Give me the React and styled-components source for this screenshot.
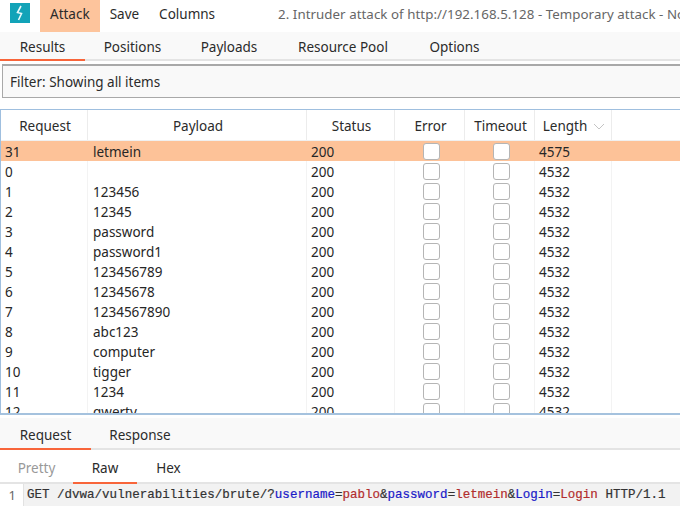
import React from "react";
import styled, { createGlobalStyle } from "styled-components";

const GlobalStyle = createGlobalStyle`
  html, body {
    margin: 0;
    padding: 0;
    background: #fff;
    overflow: hidden;
  }
  body {
    font-family: "Noto Sans", "Open Sans", sans-serif;
    font-size: 13.5px;
    color: #2b2b2b;
  }
`;

const Page = styled.div`
  width: 680px;
  height: 506px;
  display: flex;
  flex-direction: column;
  overflow: hidden;
`;

const MenuBar = styled.div`
  height: 32px;
  flex: none;
  display: flex;
  align-items: center;
  background: #fff;
  white-space: nowrap;
  overflow: hidden;
`;

const Logo = styled.svg`
  width: 20px;
  height: 20px;
  margin: 0 10px 6px 10px;
  flex: none;
`;

const MenuItem = styled.div`
  height: 32px;
  box-sizing: border-box;
  padding: 0 10px 4px;
  display: flex;
  align-items: center;
  background: ${(p) => (p.$active ? "#fdc49c" : "transparent")};
`;

const WindowTitle = styled.div`
  margin: 0 0 4px 53px;
  color: #666;
  font-size: 13.3px;
  letter-spacing: 0.05px;
`;

const TabRow = styled.div`
  height: ${(p) => p.$height}px;
  flex: none;
  display: flex;
  background: ${(p) => p.$bg || "#f9f9f9"};
  border-bottom: 2px solid #e4e4e4;
  box-sizing: border-box;
`;

const Tab = styled.div`
  width: ${(p) => p.$width}px;
  height: calc(100% + 2px);
  box-sizing: border-box;
  display: flex;
  align-items: center;
  justify-content: center;
  padding-top: 3px;
  color: ${(p) => (p.$muted ? "#999" : "#2b2b2b")};
  border-bottom: 2px solid ${(p) => (p.$active ? "#f8653a" : "transparent")};
`;

const FilterArea = styled.div`
  height: 48px;
  flex: none;
  padding: 3px 0 11px 2px;
  box-sizing: border-box;
`;

const FilterBox = styled.div`
  height: 34px;
  box-sizing: border-box;
  border: 1px solid #a9a9a9;
  border-right: none;
  border-top-width: 2px;
  background: #f9f9f9;
  display: flex;
  align-items: center;
  padding-left: 7px;
`;

const TableWrap = styled.div`
  height: 306px;
  flex: none;
  box-sizing: border-box;
  border-top: 1px solid #9fbfdf;
  border-left: 1px solid #9fbfdf;
  border-bottom: 2px solid #a5c2de;
  overflow: hidden;
`;

const columns = "87px 219px 88px 70px 70px 77px 1fr";

const HeaderRow = styled.div`
  display: grid;
  grid-template-columns: ${columns};
  height: 31px;
  border-bottom: 1px solid #f0f0f0;
  box-sizing: border-box;
`;

const HeaderCell = styled.div`
  display: flex;
  align-items: center;
  justify-content: center;
  gap: 6px;
  padding: 2px 0 0 2px;
  border-right: 1px solid #ececec;
  &:last-child {
    border-right: none;
  }
`;

const Row = styled.div`
  display: grid;
  grid-template-columns: ${columns};
  height: 20px;
  line-height: 23px;
  background: ${(p) => (p.$selected ? "#fdc298" : "#fff")};
  color: #262626;
`;

const Cell = styled.div`
  padding-left: ${(p) => p.$pad ?? 4}px;
  border-right: 1px solid ${(p) => (p.$selected ? "transparent" : "#f3f3f3")};
  overflow: hidden;
  white-space: nowrap;
`;

const BoxCell = styled(Cell)`
  display: flex;
  justify-content: center;
  align-items: flex-start;
  padding: 2px 0 0 3px;
`;

const CheckBox = styled.span`
  width: 17px;
  height: 17px;
  box-sizing: border-box;
  background: #fff;
  border: 1px solid #b5b5b5;
  border-radius: 3px;
  display: block;
`;

const Gap = styled.div`
  height: 3px;
  flex: none;
`;

const CodeLine = styled.div`
  flex: 1;
  display: flex;
  min-height: 0;
  font-family: "Liberation Mono", monospace;
  font-size: 12.52px;
  line-height: 22px;
  white-space: nowrap;
`;

const Gutter = styled.div`
  width: 24px;
  flex: none;
  text-align: right;
  padding-right: 7px;
  box-sizing: border-box;
  border-right: 1px solid #e2e2e2;
  color: #666;
  font-family: "Noto Sans", sans-serif;
  font-size: 13px;
`;

const Code = styled.div`
  flex: 1;
  padding-left: 3px;
  background: #f2f2f2;
  color: #333;
  -webkit-text-stroke: 0.2px currentColor;
`;

const Param = styled.span`
  color: #1a1ac8;
`;

const Value = styled.span`
  color: #b22d2d;
`;

const rows = [
  ["0", ""],
  ["1", "123456"],
  ["2", "12345"],
  ["3", "password"],
  ["4", "password1"],
  ["5", "123456789"],
  ["6", "12345678"],
  ["7", "1234567890"],
  ["8", "abc123"],
  ["9", "computer"],
  ["10", "tigger"],
  ["11", "1234"],
  ["12", "qwerty"],
];

const ResultRow = ({ id, payload, length, selected }) => (
  <Row $selected={selected}>
    <Cell $selected={selected} $pad={4}>{id}</Cell>
    <Cell $selected={selected} $pad={5}>{payload}</Cell>
    <Cell $selected={selected}>200</Cell>
    <BoxCell $selected={selected}><CheckBox /></BoxCell>
    <BoxCell $selected={selected}><CheckBox /></BoxCell>
    <Cell $selected={selected}>{length}</Cell>
    <Cell $selected />
  </Row>
);

const App = () => (
  <Page>
    <GlobalStyle />
    <MenuBar>
      <Logo viewBox="0 0 20 20">
        <rect width="20" height="20" fill="#12a3b8" />
        <path d="M11 3 L7.5 9.5 L11.5 10.5 L8.5 17" fill="none" stroke="#e8f8fa" strokeWidth="1.6" />
      </Logo>
      <MenuItem $active>Attack</MenuItem>
      <MenuItem>Save</MenuItem>
      <MenuItem>Columns</MenuItem>
      <WindowTitle>2. Intruder attack of http://192.168.5.128 - Temporary attack - Not saved</WindowTitle>
    </MenuBar>
    <TabRow $height={29}>
      <Tab $width={85} $active>Results</Tab>
      <Tab $width={95}>Positions</Tab>
      <Tab $width={98}>Payloads</Tab>
      <Tab $width={130}>Resource Pool</Tab>
      <Tab $width={93}>Options</Tab>
    </TabRow>
    <FilterArea>
      <FilterBox>Filter: Showing all items</FilterBox>
    </FilterArea>
    <TableWrap>
      <HeaderRow>
        <HeaderCell>Request</HeaderCell>
        <HeaderCell>Payload</HeaderCell>
        <HeaderCell>Status</HeaderCell>
        <HeaderCell>Error</HeaderCell>
        <HeaderCell>Timeout</HeaderCell>
        <HeaderCell>
          Length
          <svg width="12" height="7" viewBox="0 0 12 7">
            <path d="M1 1 L6 6 L11 1" fill="none" stroke="#c4c4c4" strokeWidth="1" />
          </svg>
        </HeaderCell>
        <HeaderCell />
      </HeaderRow>
      <ResultRow id="31" payload="letmein" length="4575" selected />
      {rows.map(([id, payload]) => (
        <ResultRow key={id} id={id} payload={payload} length="4532" />
      ))}
    </TableWrap>
    <Gap />
    <TabRow $height={32}>
      <Tab $width={91} $active>Request</Tab>
      <Tab $width={98}>Response</Tab>
    </TabRow>
    <TabRow $height={34} $bg="#fff">
      <Tab $width={73} $muted>Pretty</Tab>
      <Tab $width={64} $active>Raw</Tab>
      <Tab $width={63}>Hex</Tab>
    </TabRow>
    <CodeLine>
      <Gutter>1</Gutter>
      <Code>
        GET /dvwa/vulnerabilities/brute/?<Param>username</Param>=<Value>pablo</Value>&amp;<Param>password</Param>=<Value>letmein</Value>&amp;<Param>Login</Param>=<Value>Login</Value> HTTP/1.1
      </Code>
    </CodeLine>
  </Page>
);

export default App;
